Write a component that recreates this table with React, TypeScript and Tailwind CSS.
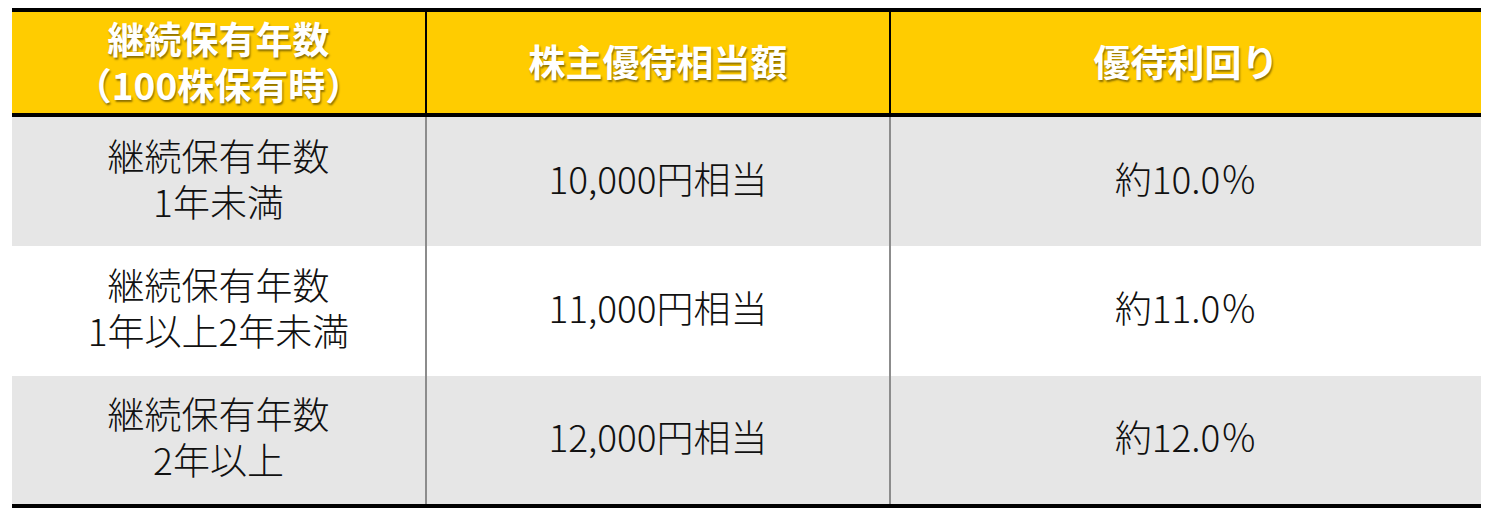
const rows = [
  { years: ["継続保有年数", "1年未満"], value: "10,000円相当", yieldRate: "約10.0％", bg: "bg-[#e6e6e6]", h: "h-[129px]" },
  { years: ["継続保有年数", "1年以上2年未満"], value: "11,000円相当", yieldRate: "約11.0％", bg: "bg-white", h: "h-[130px]" },
  { years: ["継続保有年数", "2年以上"], value: "12,000円相当", yieldRate: "約12.0％", bg: "bg-[#e6e6e6]", h: "h-[128px]" },
];

const headCell =
  "flex flex-col items-center justify-center pb-[4px] text-center font-bold text-white text-[37px] leading-[46px] [text-shadow:1px_2px_2px_rgba(0,0,0,0.45)]";
const bodyCell =
  "flex flex-col items-center justify-center pb-[8px] text-center font-light text-[37px] leading-[46px] text-[#111]";

export default function App() {
  return (
    <div className="min-h-[519px] bg-white pt-[8px] pl-[12px] font-['Noto_Sans_CJK_JP','Noto_Sans',sans-serif]">
      <div className="w-[1469px] border-t-4 border-b-4 border-black">
        <div className="grid h-[105px] grid-cols-[413px_464px_592px] border-b-4 border-black bg-[#ffcc00]">
          <div className={headCell}>
            <span>継続保有年数</span>
            <span>（100株保有時）</span>
          </div>
          <div className={`${headCell} border-l-2 border-black`}>株主優待相当額</div>
          <div className={`${headCell} border-l-2 border-black`}>優待利回り</div>
        </div>
        {rows.map((r) => (
          <div key={r.value} className={`grid grid-cols-[413px_464px_592px] ${r.bg} ${r.h}`}>
            <div className={bodyCell}>
              {r.years.map((t) => (
                <span key={t}>{t}</span>
              ))}
            </div>
            <div className={`${bodyCell} border-l-2 border-[#8c8c8c]`}>{r.value}</div>
            <div className={`${bodyCell} border-l-2 border-[#8c8c8c]`}>{r.yieldRate}</div>
          </div>
        ))}
      </div>
    </div>
  );
}
